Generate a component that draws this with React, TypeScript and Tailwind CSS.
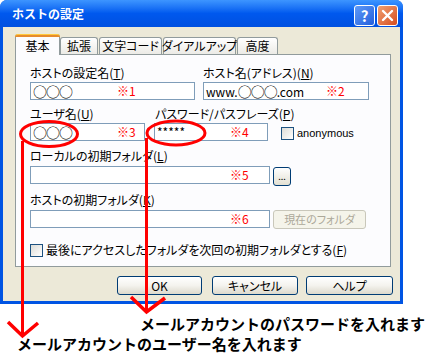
import React from 'react'

function Field({ w, lead, mark, pad }: { w: string; lead?: React.ReactNode; mark: string; pad: string }) {
  return (
    <div className={`${w} h-[18px] border border-[#7f9db9] bg-white flex items-center pl-[2px] text-[12px] leading-[14px] text-black`}>
      <span className={`${pad} shrink-0 whitespace-nowrap [font-feature-settings:normal]`}>{lead}</span>
      <span className="text-[#ff0000] whitespace-nowrap">{mark}</span>
    </div>
  )
}

function Circles() {
  return <span className="text-[14px] leading-[14px] tracking-[-1px]">○○○</span>
}

function Check() {
  return <div className="w-[13px] h-[13px] border border-[#1c5180] bg-gradient-to-br from-[#dcdcd7] to-white shrink-0" />
}

function Btn({ w, children }: { w: string; children: React.ReactNode }) {
  return (
    <div className={`${w} h-[19px] rounded-[3px] border border-[#003c74] bg-gradient-to-b from-white via-[#f4f3ee] to-[#dcd9cc] flex items-center justify-center text-[12px] leading-none text-black`}>
      {children}
    </div>
  )
}

function Tab({ label, w, active }: { label: string; w: string; active?: boolean }) {
  if (active) {
    return (
      <div className={`${w} h-[21px] -mb-[1px] relative z-10 border-x border-[#919b9c] bg-[#fcfcfe] rounded-t-[3px] flex flex-col`}>
        <div className="h-[3px] -mx-[1px] rounded-t-[3px] bg-[#e68b2c] border-t border-[#ffc83c]" />
        <div className="flex-1 flex items-center justify-center text-[12px] leading-none whitespace-nowrap">{label}</div>
      </div>
    )
  }
  return (
    <div className={`${w} h-[17px] border border-b-0 border-[#919b9c] rounded-t-[3px] bg-gradient-to-b from-white to-[#ecebe6] flex items-center justify-center text-[12px] leading-none whitespace-nowrap`}>
      {label}
    </div>
  )
}

export default function App() {
  return (
    <div className="relative w-[437px] h-[355px] bg-white overflow-hidden font-['Noto_Sans_CJK_JP','Noto_Sans',sans-serif] text-black">
      {/* window */}
      <div className="w-[403px] h-[304px] rounded-t-[7px] bg-[#0054e3] flex flex-col px-[3px] pb-[3px] [font-feature-settings:'palt']">
        <div className="h-[27px] -mx-[3px] rounded-t-[7px] bg-gradient-to-b from-[#3d95ff] via-[#0058ee] to-[#0050e0] flex items-center pl-[12px] pr-[5px]">
          <span className="text-white font-bold text-[12px] leading-none flex-1 [font-feature-settings:normal]">ホストの設定</span>
          <div className="w-[21px] h-[21px] rounded-[3px] border border-white bg-gradient-to-br from-[#5f9af8] to-[#245edb] flex items-center justify-center text-white font-bold text-[15px] leading-none mt-[4px]">?</div>
          <div className="w-[21px] h-[21px] ml-[2px] rounded-[3px] border border-white bg-gradient-to-br from-[#f0a070] to-[#d44a1a] flex items-center justify-center mt-[4px]">
            <svg width="13" height="13" viewBox="0 0 13 13"><path d="M2 2 L11 11 M11 2 L2 11" stroke="white" strokeWidth="2.4" strokeLinecap="round" /></svg>
          </div>
        </div>
        <div className="flex-1 bg-[#ece9d8] flex flex-col pt-[7px] pl-[12px] pr-[7px]">
          {/* tabs */}
          <div className="flex items-end h-[20px]">
            <Tab label="基本" w="w-[45px]" active />
            <Tab label="拡張" w="w-[38px]" />
            <div className="w-[1px]" />
            <Tab label="文字コード" w="w-[63px]" />
            <div className="w-[1px]" />
            <Tab label="ダイアルアップ" w="w-[73px]" />
            <div className="w-[1px]" />
            <Tab label="高度" w="w-[41px]" />
          </div>
          {/* panel */}
          <div className="w-[376px] h-[213px] border border-[#919b9c] bg-[#fcfcfe] pl-[14px] pt-[11px] flex flex-col text-[12px] leading-[14px] whitespace-nowrap">
            <div className="flex gap-[8px]">
              <div className="flex flex-col gap-[2px]">
                <span>ホストの設定名(<u>T</u>)</span>
                <Field w="w-[165px]" pad="w-[84px]" lead={<Circles />} mark="※1" />
              </div>
              <div className="flex flex-col gap-[2px]">
                <span>ホスト名(アドレス)(<u>N</u>)</span>
                <Field w="w-[166px]" pad="w-[120px]" lead={<>www.<Circles />.com</>} mark="※2" />
              </div>
            </div>
            <div className="flex items-end mt-[7px]">
              <div className="flex flex-col gap-[2px]">
                <span>ユーザ名(<u>U</u>)</span>
                <Field w="w-[115px]" pad="w-[84px]" lead={<Circles />} mark="※3" />
              </div>
              <div className="w-[114px] flex flex-col gap-[2px] ml-[9px]">
                <span className="pl-[1px] w-[114px] overflow-visible">パスワード/パスフレーズ(<u>P</u>)</span>
                <Field w="w-[114px]" pad="w-[73px]" lead="*****" mark="※4" />
              </div>
              <div className="flex items-center ml-[13px] mb-[1px]">
                <Check />
                <span className="ml-[3px] font-['Liberation_Sans',sans-serif] text-[11px] leading-[13px]">anonymous</span>
              </div>
            </div>
            <span className="mt-[8px]">ローカルの初期フォルダ(<u>L</u>)</span>
            <div className="flex items-start gap-[3px] mt-[3px]">
              <Field w="w-[240px]" pad="w-[197px]" lead="" mark="※5" />
              <div className="w-[18px] h-[19px] mt-[1px] rounded-[3px] border border-[#003c74] bg-gradient-to-b from-white to-[#e3e0d2] flex items-end justify-center pb-[4px] text-[9px] leading-none">...</div>
            </div>
            <span className="mt-[7px]">ホストの初期フォルダ(<u>K</u>)</span>
            <div className="flex items-start gap-[3px] mt-[3px]">
              <Field w="w-[240px]" pad="w-[197px]" lead="" mark="※6" />
              <div className="w-[93px] h-[19px] rounded-[3px] border border-[#c9c7ba] bg-[#f5f4ea] flex items-center justify-center text-[11px] leading-none text-[#aca899]">現在のフォルダ</div>
            </div>
            <div className="flex items-center mt-[14px]">
              <Check />
              <span className="ml-[3px]">最後にアクセスしたフォルダを次回の初期フォルダとする(<u>F</u>)</span>
            </div>
          </div>
          {/* buttons */}
          <div className="flex mt-[9px] pl-[102px]">
            <Btn w="w-[85px]">OK</Btn>
            <div className="w-[10px]" />
            <Btn w="w-[86px]">キャンセル</Btn>
            <div className="w-[8px]" />
            <Btn w="w-[87px]">ヘルプ</Btn>
          </div>
        </div>
      </div>
      {/* notes */}
      <div className="flex flex-col pt-[10px] text-[15px] leading-[20px] font-bold">
        <span className="pl-[140px] whitespace-nowrap">メールアカウントのパスワードを入れます</span>
        <span className="pl-[17px] whitespace-nowrap">メールアカウントのユーザー名を入れます</span>
      </div>
      {/* red annotation marks */}
      <svg className="absolute inset-0 pointer-events-none" width="437" height="355" viewBox="0 0 437 355">
        <g fill="none" stroke="#ff0000" strokeWidth="3">
          <ellipse cx="49" cy="134" rx="28.5" ry="12.5" />
          <ellipse cx="176" cy="133" rx="29" ry="12" />
          <path d="M22.5 141 V336" />
          <path d="M146.5 138 V312" />
          <path d="M8 322 L22.5 336 L38 323" strokeWidth="3.5" />
          <path d="M131 297 L146.5 312 L165 298" strokeWidth="3.5" />
        </g>
      </svg>
    </div>
  )
}
